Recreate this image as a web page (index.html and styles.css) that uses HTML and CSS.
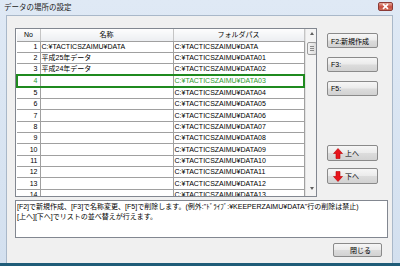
FILE: index.html
```html
<!DOCTYPE html>
<html lang="ja">
<head>
  <meta charset="UTF-8" />
  <title>データの場所の設定</title>
  <link rel="stylesheet" href="styles.css">
</head>
<body>
  <div class="window">
    <div class="titlebar">
      <span class="title">データの場所の設定</span>
      <span class="close-x">
        <svg width="15" height="9" viewBox="0 0 15 9">
          <path d="M5 2.2 L10 6.8 M10 2.2 L5 6.8" stroke="#fff" stroke-width="1.6" />
        </svg>
      </span>
    </div>

    <div class="client">
      <div class="top">
        <div class="grid">
          <table class="list">
            <colgroup>
              <col class="c-no"><col class="c-name"><col class="c-path">
            </colgroup>
            <thead>
              <tr><th class="no-h">No</th><th>名称</th><th>フォルダパス</th></tr>
            </thead>
            <tbody id="rows"></tbody>
          </table>
          <div class="vscroll">
            <span class="arrow up"></span>
            <span class="thumb"><i></i><i></i><i></i></span>
            <span class="track"></span>
            <span class="arrow down"></span>
          </div>
        </div>

        <div class="side">
          <button class="btn">F2:新規作成</button>
          <button class="btn">F3:</button>
          <button class="btn">F5:</button>
          <button class="btn move first-move">
            <svg width="10" height="11" viewBox="0 0 10 11"><path d="M5 0.5 L9.5 5.5 L7 5.5 L7 10.5 L3 10.5 L3 5.5 L0.5 5.5 Z" fill="#e8141c" stroke="#b00" stroke-width="0.6"/></svg>
            上へ
          </button>
          <button class="btn move">
            <svg width="10" height="11" viewBox="0 0 10 11"><path d="M5 10.5 L9.5 5.5 L7 5.5 L7 0.5 L3 0.5 L3 5.5 L0.5 5.5 Z" fill="#e8141c" stroke="#b00" stroke-width="0.6"/></svg>
            下へ
          </button>
        </div>
      </div>

      <div class="note">
        [F2]で新規作成、[F3]で名称変更、[F5]で削除します。(例外:"ﾄﾞﾗｲﾌﾞ:¥KEEPERZAIMU¥DATA"行の削除は禁止)<br>
        [上へ][下へ]でリストの並べ替えが行えます。
      </div>

      <div class="foot">
        <button class="btn close-btn">閉じる</button>
      </div>
    </div>
  </div>

  <script>
    const names = ['C:¥TACTICSZAIMU¥DATA', '平成25年データ', '平成24年データ'];
    const body = document.getElementById('rows');

    for (let i = 1; i <= 14; i++) {
      const row = document.createElement('tr');
      const suffix = i === 1 ? '' : String(i - 1).padStart(2, '0');
      if (i === 4) row.classList.add('current');
      row.innerHTML = `<td class="no">${i}</td><td>${names[i - 1] || ''}</td><td class="path">C:¥TACTICSZAIMU¥DATA${suffix}</td>`;
      body.appendChild(row);
    }
  </script>
</body>
</html>
```

FILE: styles.css
```css
* {
  box-sizing: border-box;
}

body {
  margin: 0;
  width: 400px;
  height: 266px;
  overflow: hidden;
  font-family: "Liberation Sans", "Noto Sans CJK JP", sans-serif;
  font-size: 7px;
  color: #000;
}

.window {
  width: 400px;
  height: 266px;
  background: linear-gradient(to bottom, #dfe9f5, #d3e0ef);
  padding: 0 7px 0 6px;
  display: flex;
  flex-direction: column;
  border-bottom: 3px solid #1f5c78;
}

.titlebar {
  height: 15px;
  display: flex;
  justify-content: space-between;
  align-items: flex-start;
  margin-left: -2px;
}

.title {
  font-family: "Noto Sans CJK JP", sans-serif;
  font-size: 7.5px;
  line-height: 14px;
  color: #1a1a1a;
}

.close-x {
  margin-top: 2px;
  width: 15px;
  height: 9px;
  border: 1px solid #8a3a36;
  border-radius: 2px;
  background: linear-gradient(to bottom, #e5a99a, #c74d3f 55%, #d0705c);
  display: flex;
}

.close-x svg {
  margin: -1px;
}

.client {
  flex: 1;
  background: #f0f0f0;
  border: 1px solid #a9b8c9;
  border-bottom: none;
  padding: 12px 4px 0 8px;
  display: flex;
  flex-direction: column;
}

.top {
  display: flex;
}

.grid {
  width: 302px;
  height: 169px;
  border: 1px solid #828790;
  background: #fff;
  display: flex;
  overflow: hidden;
}

.list {
  width: 287px;
  table-layout: fixed;
  border-collapse: collapse;
  align-self: flex-start;
}

.c-no { width: 23px; }
.c-name { width: 133px; }
.c-path { width: 131px; }

.list th {
  height: 12px;
  padding: 0;
  font-weight: normal;
  background: linear-gradient(to bottom, #fdfdfd, #eceef1);
  border-right: 1px solid #c5c5c5;
  border-bottom: 1px solid #a0a0a0;
  line-height: 11px;
}

.list th.no-h {
  text-align: left;
  padding-left: 7px;
}

.list td {
  height: 11.33px;
  padding: 0 1px;
  border: 1px solid #a0a0a0;
  border-top: none;
  line-height: 10px;
  white-space: nowrap;
  overflow: hidden;
}

.list td:first-child {
  border-left: none;
}

.list td.no {
  text-align: right;
  padding-right: 2px;
}

.list tr.current td {
  color: #2f9a2f;
  border-top: 2px solid #1f8a1f;
  border-bottom: 2px solid #1f8a1f;
}

.list tr.current td:first-child {
  border-left: 2px solid #1f8a1f;
}

.list tr.current td:last-child {
  border-right: 2px solid #1f8a1f;
}

.vscroll {
  width: 13px;
  flex: none;
  background: #f4f4f4;
  border-left: 1px solid #e2e2e2;
  display: flex;
  flex-direction: column;
  align-items: center;
}

.arrow {
  width: 0;
  height: 0;
  border-left: 2.5px solid transparent;
  border-right: 2.5px solid transparent;
  margin: 3px 0;
}

.arrow.up {
  border-bottom: 3px solid #606060;
}

.arrow.down {
  border-top: 3px solid #606060;
  margin-bottom: 6px;
}

.thumb {
  margin-top: 4px;
  width: 10px;
  height: 13px;
  border: 1px solid #9b9b9b;
  border-radius: 2px;
  background: linear-gradient(to right, #f4f4f4, #dcdcdc);
  display: flex;
  flex-direction: column;
  justify-content: center;
  align-items: center;
  gap: 1px;
}

.thumb i {
  width: 4px;
  height: 1px;
  background: #8a8a8a;
}

.track {
  flex: 1;
}

.side {
  margin-left: 10px;
  padding-top: 5px;
  display: flex;
  flex-direction: column;
  gap: 9px;
}

.btn {
  width: 51px;
  height: 15px;
  padding: 0 0 0 3px;
  font-family: "Liberation Sans", "Noto Sans CJK JP", sans-serif;
  font-size: 7px;
  color: #000;
  text-align: left;
  border: 1px solid #8a8a8a;
  border-radius: 2px;
  background: linear-gradient(to bottom, #f6f6f6 0%, #ebebeb 48%, #dcdcdc 52%, #d2d2d2 100%);
  display: flex;
  align-items: center;
  white-space: nowrap;
}

.btn.move {
  padding-left: 5px;
  gap: 2px;
  height: 16px;
  margin-top: -2px;
}

.btn.first-move {
  margin-top: 40px;
}

.note {
  margin-top: 3px;
  height: 38px;
  background: #fff;
  border: 1px solid #828790;
  padding: 1px 1px;
  line-height: 10px;
  white-space: nowrap;
  overflow: hidden;
}

.foot {
  display: flex;
  justify-content: flex-end;
  margin-top: 5px;
  padding-right: 6px;
}

.close-btn {
  width: 49px;
  height: 14px;
  justify-content: center;
  padding-left: 6px;
}
```
